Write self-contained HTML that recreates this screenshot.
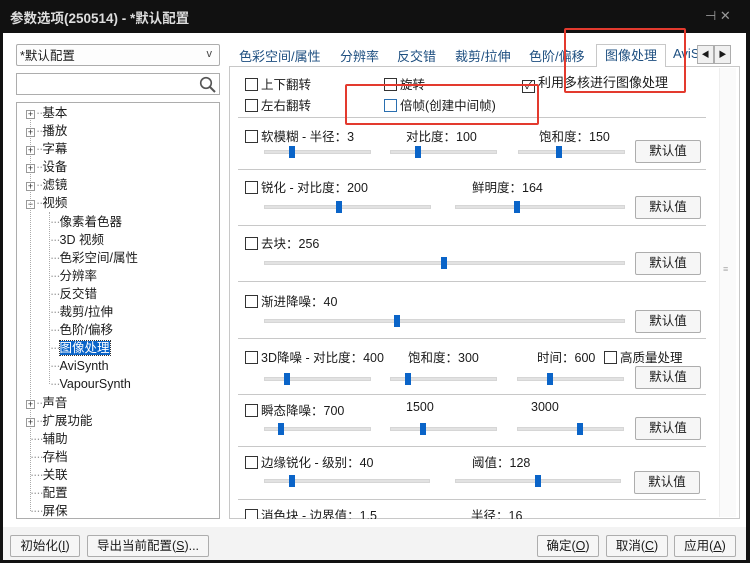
<!DOCTYPE html>
<html><head><meta charset="utf-8"><style>
*{margin:0;padding:0;box-sizing:border-box}
body{width:750px;height:563px;background:#111;font-family:"Liberation Sans","Noto Sans CJK SC",sans-serif;font-size:12.5px;color:#1a1a1a;position:relative;overflow:hidden}
.a{position:absolute;white-space:nowrap}
#win{position:absolute;left:3px;top:33px;width:743px;height:527px;background:#fff}
#bot{position:absolute;left:3px;top:527px;width:743px;height:33px;background:#f3f3f3}
.box{position:absolute;border:1px solid #adadad;background:#fff}
.btn{position:absolute;border:1px solid #adadad;background:#f6f6f6;text-align:center;line-height:20px;font-size:12.5px;border-radius:2px}
.cb{display:inline-block;width:13px;height:13px;border:1px solid #333;background:#fff;vertical-align:-2px;margin-right:3px}
.sep{position:absolute;left:238px;width:468px;height:1px;background:#c8c8c8}
.tr{position:absolute;height:4px;background:#e2e2e2;border:1px solid #d6d6d6}
.th{position:absolute;width:6px;height:12px;background:#0a64c8}
.red{position:absolute;border:2px solid #e33a2e;border-radius:2px}
.tree{position:absolute;font-size:12.5px}
.pl{display:inline-block;width:9px;height:9px;border:1px solid #999;font-size:9px;line-height:7px;text-align:center;color:#333;vertical-align:0;margin-right:1px}
.d{color:#999;letter-spacing:-1px}
</style></head><body>
<div class="a" style="left:10px;top:7px;color:#ddd;font-size:13.5px;font-weight:bold">参数选项(250514) - *默认配置</div>
<div class="a" style="left:705px;top:8px;color:#999;font-size:13px">⊣ ✕</div>
<div id="win"></div><div id="bot"></div>

<div class="box" style="left:16px;top:44px;width:204px;height:22px;border-radius:2px;background:#fdfdfd"><span class="a" style="left:3px;top:3px;line-height:16px">*默认配置</span><span class="a" style="right:7px;top:3px;font-size:11px;color:#444">v</span></div>
<div class="box" style="left:16px;top:73px;width:204px;height:22px"><svg class="a" style="right:3px;top:2px" width="17" height="17"><circle cx="7" cy="7" r="5.3" stroke="#555" stroke-width="1.6" fill="none"/><line x1="11" y1="11" x2="16" y2="16" stroke="#555" stroke-width="2"/></svg></div>
<div class="box" style="left:16px;top:102px;width:204px;height:417px"></div>
<div class="a" style="left:30px;top:118px;width:1px;height:393px;border-left:1px dotted #aaa"></div>
<div class="a" style="left:49px;top:212px;width:1px;height:172px;border-left:1px dotted #aaa"></div>
<div class="tree" style="left:26px;top:104px;line-height:18.1px">
<div><span class="pl">+</span><span class="d">··</span>基本</div><div><span class="pl">+</span><span class="d">··</span>播放</div><div><span class="pl">+</span><span class="d">··</span>字幕</div><div><span class="pl">+</span><span class="d">··</span>设备</div><div><span class="pl">+</span><span class="d">··</span>滤镜</div><div><span class="pl">−</span><span class="d">··</span>视频</div>
<div style="padding-left:24px"><span class="d">···</span>像素着色器</div><div style="padding-left:24px"><span class="d">···</span>3D 视频</div><div style="padding-left:24px"><span class="d">···</span>色彩空间/属性</div><div style="padding-left:24px"><span class="d">···</span>分辨率</div><div style="padding-left:24px"><span class="d">···</span>反交错</div><div style="padding-left:24px"><span class="d">···</span>裁剪/拉伸</div><div style="padding-left:24px"><span class="d">···</span>色阶/偏移</div><div style="padding-left:24px"><span class="d">···</span><span style="background:#0a64c8;color:#fff;outline:1px dotted #333">图像处理</span></div><div style="padding-left:24px"><span class="d">···</span>AviSynth</div><div style="padding-left:24px"><span class="d">···</span>VapourSynth</div>
<div><span class="pl">+</span><span class="d">··</span>声音</div><div><span class="pl">+</span><span class="d">··</span>扩展功能</div><div style="padding-left:4px"><span class="d">····</span>辅助</div><div style="padding-left:4px"><span class="d">····</span>存档</div><div style="padding-left:4px"><span class="d">····</span>关联</div><div style="padding-left:4px"><span class="d">····</span>配置</div><div style="padding-left:4px"><span class="d">····</span>屏保</div>
</div>

<div style="position:absolute;left:229px;top:66px;width:511px;height:453px;border:1px solid #c8c8c8"></div>
<div class="a" style="left:239px;top:46px;color:#1e4f80;font-size:13px">色彩空间/属性</div>
<div class="a" style="left:340px;top:46px;color:#1e4f80;font-size:13px">分辨率</div>
<div class="a" style="left:397px;top:46px;color:#1e4f80;font-size:13px">反交错</div>
<div class="a" style="left:455px;top:46px;color:#1e4f80;font-size:13px">裁剪/拉伸</div>
<div class="a" style="left:529px;top:46px;color:#1e4f80;font-size:13px">色阶/偏移</div>
<div class="a" style="left:596px;top:44px;width:70px;height:23px;border:1px solid #c8c8c8;border-bottom:none;background:#fff;color:#1e4f80;font-size:13px;text-align:center;line-height:21px">图像处理</div>
<div class="a" style="left:673px;top:46px;color:#1e4f80;font-size:13px;width:24px;overflow:hidden">AviS</div>
<div class="a" style="left:697px;top:45px;width:17px;height:19px;border:1px solid #adadad;background:#f0f0f0;font-size:8px;text-align:center;line-height:17px">◀</div>
<div class="a" style="left:714px;top:45px;width:17px;height:19px;border:1px solid #adadad;background:#f0f0f0;font-size:8px;text-align:center;line-height:17px">▶</div>
<div class="a" style="left:719px;top:68px;width:17px;height:449px;background:#fafafa;border-left:1px solid #eee"></div>
<div class="a" style="left:723px;top:264px;color:#aaa;font-size:9px">≡</div>

<div class="a" style="left:245px;top:74px"><span class="cb"></span>上下翻转</div>
<div class="a" style="left:245px;top:95px"><span class="cb"></span>左右翻转</div>
<div class="a" style="left:384px;top:74px"><span class="cb"></span>旋转</div>
<div class="a" style="left:384px;top:95px"><span class="cb" style="border-color:#2a6fb0"></span>倍帧(创建中间帧)</div>
<div class="a" style="left:522px;top:72px;font-size:13px"><span class="cb" style="text-align:center;font-size:11px;line-height:11px">✓</span>利用多核进行图像处理</div>

<div class="sep" style="top:117px"></div><div class="sep" style="top:169px"></div><div class="sep" style="top:225px"></div><div class="sep" style="top:281px"></div><div class="sep" style="top:338px"></div><div class="sep" style="top:394px"></div><div class="sep" style="top:446px"></div><div class="sep" style="top:499px"></div>

<div class="a" style="left:245px;top:126px"><span class="cb"></span>软模糊 - 半径：3</div>
<div class="a" style="left:406px;top:126px">对比度：100</div>
<div class="a" style="left:539px;top:126px">饱和度：150</div>
<div class="a" style="left:245px;top:177px"><span class="cb"></span>锐化 - 对比度：200</div>
<div class="a" style="left:472px;top:177px">鲜明度：164</div>
<div class="a" style="left:245px;top:233px"><span class="cb"></span>去块：256</div>
<div class="a" style="left:245px;top:291px"><span class="cb"></span>渐进降噪：40</div>
<div class="a" style="left:245px;top:347px"><span class="cb"></span>3D降噪 - 对比度：400</div>
<div class="a" style="left:408px;top:347px">饱和度：300</div>
<div class="a" style="left:537px;top:347px">时间：600</div>
<div class="a" style="left:604px;top:347px"><span class="cb"></span>高质量处理</div>
<div class="a" style="left:245px;top:400px"><span class="cb"></span>瞬态降噪：700</div>
<div class="a" style="left:406px;top:400px">1500</div>
<div class="a" style="left:531px;top:400px">3000</div>
<div class="a" style="left:245px;top:452px"><span class="cb"></span>边缘锐化 - 级别：40</div>
<div class="a" style="left:472px;top:452px">阈值：128</div>
<div class="a" style="left:245px;top:505px;height:14px;overflow:hidden"><span class="cb"></span>消色块 - 边界值：1.5</div>
<div class="a" style="left:471px;top:505px;height:14px;overflow:hidden">半径：16</div>

<div class="tr" style="left:264px;top:150px;width:107px"></div><div class="th" style="left:289px;top:146px"></div>
<div class="tr" style="left:390px;top:150px;width:107px"></div><div class="th" style="left:415px;top:146px"></div>
<div class="tr" style="left:518px;top:150px;width:107px"></div><div class="th" style="left:556px;top:146px"></div>
<div class="tr" style="left:264px;top:205px;width:167px"></div><div class="th" style="left:336px;top:201px"></div>
<div class="tr" style="left:455px;top:205px;width:170px"></div><div class="th" style="left:514px;top:201px"></div>
<div class="tr" style="left:264px;top:261px;width:361px"></div><div class="th" style="left:441px;top:257px"></div>
<div class="tr" style="left:264px;top:319px;width:361px"></div><div class="th" style="left:394px;top:315px"></div>
<div class="tr" style="left:264px;top:377px;width:107px"></div><div class="th" style="left:284px;top:373px"></div>
<div class="tr" style="left:390px;top:377px;width:107px"></div><div class="th" style="left:405px;top:373px"></div>
<div class="tr" style="left:517px;top:377px;width:107px"></div><div class="th" style="left:547px;top:373px"></div>
<div class="tr" style="left:264px;top:427px;width:107px"></div><div class="th" style="left:278px;top:423px"></div>
<div class="tr" style="left:390px;top:427px;width:107px"></div><div class="th" style="left:420px;top:423px"></div>
<div class="tr" style="left:517px;top:427px;width:107px"></div><div class="th" style="left:577px;top:423px"></div>
<div class="tr" style="left:264px;top:479px;width:166px"></div><div class="th" style="left:289px;top:475px"></div>
<div class="tr" style="left:455px;top:479px;width:166px"></div><div class="th" style="left:535px;top:475px"></div>

<div class="btn" style="left:635px;top:140px;width:66px;height:23px">默认值</div>
<div class="btn" style="left:635px;top:196px;width:66px;height:23px">默认值</div>
<div class="btn" style="left:635px;top:252px;width:66px;height:23px">默认值</div>
<div class="btn" style="left:635px;top:310px;width:66px;height:23px">默认值</div>
<div class="btn" style="left:635px;top:366px;width:66px;height:23px">默认值</div>
<div class="btn" style="left:635px;top:417px;width:66px;height:23px">默认值</div>
<div class="btn" style="left:634px;top:471px;width:66px;height:23px">默认值</div>

<div class="btn" style="left:10px;top:535px;width:70px;height:22px">初始化(<u>I</u>)</div>
<div class="btn" style="left:87px;top:535px;width:122px;height:22px">导出当前配置(<u>S</u>)...</div>
<div class="btn" style="left:537px;top:535px;width:62px;height:22px">确定(<u>O</u>)</div>
<div class="btn" style="left:606px;top:535px;width:62px;height:22px">取消(<u>C</u>)</div>
<div class="btn" style="left:674px;top:535px;width:62px;height:22px">应用(<u>A</u>)</div>

<div class="red" style="left:345px;top:84px;width:194px;height:41px"></div>
<div class="red" style="left:564px;top:28px;width:122px;height:65px"></div>
</body></html>
